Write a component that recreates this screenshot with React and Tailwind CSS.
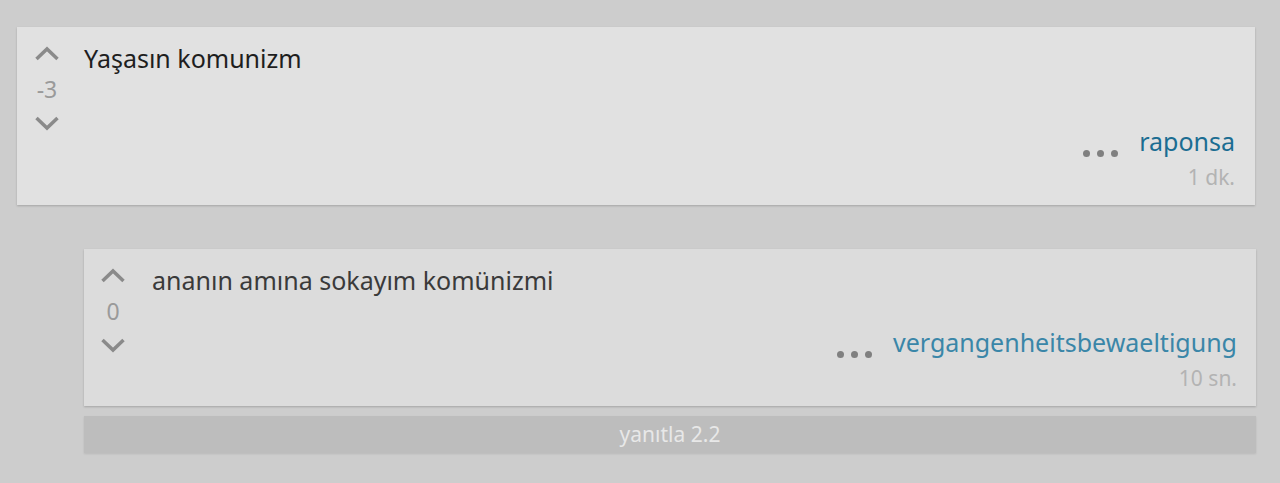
import React from "react";

function Chevron({ down }) {
  return (
    <svg width="24" height="15" viewBox="0 0 24 15" className="block">
      <path
        d={down ? "M1.5 2 L12 12 L22.5 2" : "M1.5 13 L12 3 L22.5 13"}
        fill="none"
        stroke="#8a8a8a"
        strokeWidth="3.5"
      />
    </svg>
  );
}

function Dots() {
  return (
    <div className="flex gap-[7px] self-start mt-[26px]">
      <span className="w-[7px] h-[7px] rounded-full bg-[#808080]" />
      <span className="w-[7px] h-[7px] rounded-full bg-[#808080]" />
      <span className="w-[7px] h-[7px] rounded-full bg-[#808080]" />
    </div>
  );
}

function Vote({ n }) {
  return (
    <div className="w-[24px] flex flex-col items-center shrink-0 pt-[19px]">
      <Chevron />
      <div className="text-[23px] leading-[30px] mt-[13px] mb-[12px] text-[#9a9a9a]">{n}</div>
      <Chevron down />
    </div>
  );
}

export default function App() {
  return (
    <div
      className="min-h-[483px] bg-[#cdcdcd] pt-[27px]"
      style={{ fontFamily: '"Noto Sans", "Open Sans", sans-serif' }}
    >
      <div className="ml-[17px] w-[1238px] h-[178px] bg-[#e1e1e1] shadow-[0_1px_2px_rgba(0,0,0,0.2)] flex pl-[18px] pr-[20px]">
        <Vote n="-3" />
        <div className="flex-1 flex flex-col pl-[25px] pt-[14px]">
          <div className="text-[25px] leading-[34px] text-[#1e1e1e]">Yaşasın komunizm</div>
          <div className="mt-[49px] flex justify-end gap-[21px]">
            <Dots />
            <span className="text-[25px] leading-[34px] text-[#1b6d92]">raponsa</span>
          </div>
          <div className="text-right text-[21px] leading-[28px] text-[#b3b3b3] mt-[5px]">1 dk.</div>
        </div>
      </div>

      <div className="ml-[84px] w-[1172px] mt-[44px] h-[157px] bg-[#dcdcdc] shadow-[0_1px_2px_rgba(0,0,0,0.2)] flex pl-[17px] pr-[19px]">
        <Vote n="0" />
        <div className="flex-1 flex flex-col pl-[27px] pt-[14px]">
          <div className="text-[25px] leading-[34px] text-[#3a3a3a]">ananın amına sokayım komünizmi</div>
          <div className="mt-[28px] flex justify-end gap-[21px]">
            <Dots />
            <span className="text-[25px] leading-[34px] text-[#3a86a8]">vergangenheitsbewaeltigung</span>
          </div>
          <div className="text-right text-[21px] leading-[28px] text-[#b3b3b3] mt-[5px]">10 sn.</div>
        </div>
      </div>

      <div className="ml-[84px] w-[1172px] mt-[10px] h-[37px] bg-[#bdbdbd] flex items-center justify-center text-[21px] text-[#e8e8e8] shadow-[0_1px_2px_rgba(0,0,0,0.1)]">
        yanıtla 2.2
      </div>
    </div>
  );
}
